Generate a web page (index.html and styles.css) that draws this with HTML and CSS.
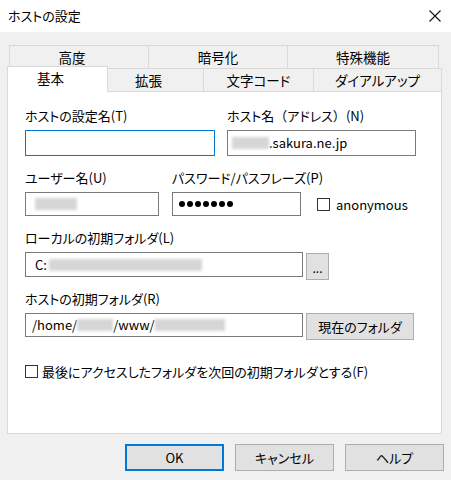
FILE: index.html
```html
<!DOCTYPE html>
<html lang="ja">
<head>
<meta charset="utf-8">
<title>ホストの設定</title>
<link rel="stylesheet" href="styles.css">
</head>
<body>
<div class="window">
  <div class="titlebar">
    <span class="title">ホストの設定</span>
    <svg class="close" width="12" height="12" viewBox="0 0 12 12"><path d="M0.5 0.5 L11.5 11.5 M11.5 0.5 L0.5 11.5" stroke="#111" stroke-width="1.1" fill="none"/></svg>
  </div>
  <div class="client">
    <div class="tabrow row1">
      <div class="tab t1 shift">高度</div>
      <div class="tab t2">暗号化</div>
      <div class="tab t3">特殊機能</div>
    </div>
    <div class="tabrow row2">
      <div class="tab sel shift">基本</div>
      <div class="tab t5 shift">拡張</div>
      <div class="tab t6">文字コード</div>
      <div class="tab t7">ダイアルアップ</div>
    </div>
    <div class="panel">
      <div class="row rowA">
        <div class="field wA1">
          <div class="label">ホストの設定名(T)</div>
          <div class="input hA focus"></div>
        </div>
        <div class="field wA2">
          <div class="label">ホスト名<span class="fw">（</span>アドレス<span class="fw">）</span>(N)</div>
          <div class="input hA pad4"><span class="blur bw37"></span><span class="latin">.sakura.ne.jp</span></div>
        </div>
      </div>
      <div class="row rowB">
        <div class="field wB1">
          <div class="label">ユーザー名(U)</div>
          <div class="input hB pad9"><span class="blur bw42"></span></div>
        </div>
        <div class="field wB2">
          <div class="label">パスワード/パスフレーズ(P)</div>
          <div class="input hB pad6 dots"><i></i><i></i><i></i><i></i><i></i><i></i><i></i></div>
        </div>
        <div class="check anon"><span class="box"></span><span class="latin">anonymous</span></div>
      </div>
      <div class="label lblC">ローカルの初期フォルダ(L)</div>
      <div class="row rowC">
        <div class="input hC wLong pad9"><span class="latin">C:</span><span class="blur bw153 ml2"></span></div>
        <div class="btn small">...</div>
      </div>
      <div class="label lblD">ホストの初期フォルダ(R)</div>
      <div class="row rowD">
        <div class="input hB wLong pad6"><span class="latin">/home/</span><span class="blur bw36"></span><span class="latin">/www/</span><span class="blur bw70"></span></div>
        <div class="btn cur">現在のフォルダ</div>
      </div>
      <div class="check last"><span class="box"></span><span>最後にアクセスしたフォルダを次回の初期フォルダとする(F)</span></div>
    </div>
    <div class="buttons">
      <div class="btn dlg default">OK</div>
      <div class="btn dlg">キャンセル</div>
      <div class="btn dlg">ヘルプ</div>
    </div>
  </div>
</div>
</body>
</html>
```
FILE: styles.css
```css
* { box-sizing: border-box; }
html, body { margin: 0; padding: 0; }
body {
  background: #f0f0f0;
  font-family: "Noto Sans CJK JP", "Noto Sans", sans-serif;
  font-size: 13px;
  color: #000;
  font-feature-settings: "palt";
}
.window {
  width: 451px;
  height: 480px;
  background: #f0f0f0;
  display: flex;
  flex-direction: column;
}
.titlebar {
  height: 32px;
  background: #fff;
  display: flex;
  align-items: center;
  justify-content: space-between;
  padding: 0 10px 0 8px;
}
.title { font-size: 13px; line-height: 16px; }
.close { display: block; margin-top: -1px; }

.client { padding: 13px 0 0 7px; }
.tabrow { display: flex; height: 23px; }
.row1 { padding-left: 2px; }
.tab {
  border: 1px solid #d9d9d9;
  border-bottom: none;
  margin-left: -1px;
  background: #f0f0f0;
  display: flex;
  justify-content: center;
  align-items: center;
  line-height: 16px;
  white-space: nowrap;
  font-size: 13.5px;
}
.tab:first-child { margin-left: 0; }
.shift { padding-right: 14px; }
.t1 { width: 140px; }
.t2 { width: 140px; }
.t3 { width: 152px; }
.sel {
  width: 101px;
  height: 26px;
  margin-top: -2px;
  background: #fff;
  position: relative;
  z-index: 2;
  align-items: flex-start;
  padding-top: 3px;
}
.t5 { width: 97px; }
.t6 { width: 111px; }
.t7 { width: 129px; }

.panel {
  width: 435px;
  height: 343px;
  border: 1px solid #d9d9d9;
  background: #fff;
  padding: 16px 0 0 17px;
}
.row { display: flex; }
.rowA { gap: 12px; }
.rowB { margin-top: 14px; gap: 13px; align-items: flex-end; }
.field { display: flex; flex-direction: column; }
.label {
  line-height: 16px;
  height: 16px;
  margin-bottom: 6px;
  white-space: nowrap;
}
.fw { font-feature-settings: normal; }
.wA1 { width: 190px; }
.wA2 { width: 189px; }
.wB1 { width: 134px; }
.wB2 { width: 129px; }
.input {
  border: 1px solid #7a7a7a;
  background: #fff;
  display: flex;
  align-items: center;
  line-height: 16px;
  white-space: nowrap;
  overflow: hidden;
}
.focus { border-color: #0078d7; }
.hA { height: 26px; }
.hB { height: 24px; }
.hC { height: 25px; }
.pad4 { padding-left: 4px; }
.pad6 { padding-left: 6px; }
.pad9 { padding-left: 9px; }
.latin { font-size: 13px; }
.blur {
  display: inline-block;
  height: 12px;
  background: #d6d6d6;
  filter: blur(1.5px);
}
.bw37 { width: 37px; }
.bw42 { width: 42px; }
.bw153 { width: 153px; }
.bw36 { width: 36px; }
.bw70 { width: 70px; }
.ml2 { margin-left: 2px; }
.dots { gap: 2px; }
.dots i {
  display: block;
  width: 6px;
  height: 6px;
  border-radius: 50%;
  background: #000;
}
.check { display: flex; align-items: center; gap: 4px; white-space: nowrap; }
.box {
  display: block;
  width: 13px;
  height: 13px;
  border: 1px solid #333;
  background: #fff;
}
.anon { height: 24px; margin-left: 3px; gap: 6px; }
.lblC { margin-top: 14px; }
.lblD { margin-top: 11px; }
.rowC, .rowD { gap: 3px; align-items: flex-start; }
.wLong { width: 278px; }
.btn {
  background: #e1e1e1;
  border: 1px solid #adadad;
  display: flex;
  align-items: center;
  justify-content: center;
  line-height: 16px;
  white-space: nowrap;
}
.small { width: 23px; height: 27px; margin-top: 1px; font-size: 12px; padding-top: 3px; }
.cur { width: 108px; height: 27px; }
.last { margin-top: 22px; }

.buttons {
  margin-top: 10px;
  display: flex;
  justify-content: flex-end;
  gap: 11px;
  padding-right: 7px;
}
.dlg { width: 99px; height: 27px; }
.default { border: 2px solid #0078d7; }
```
